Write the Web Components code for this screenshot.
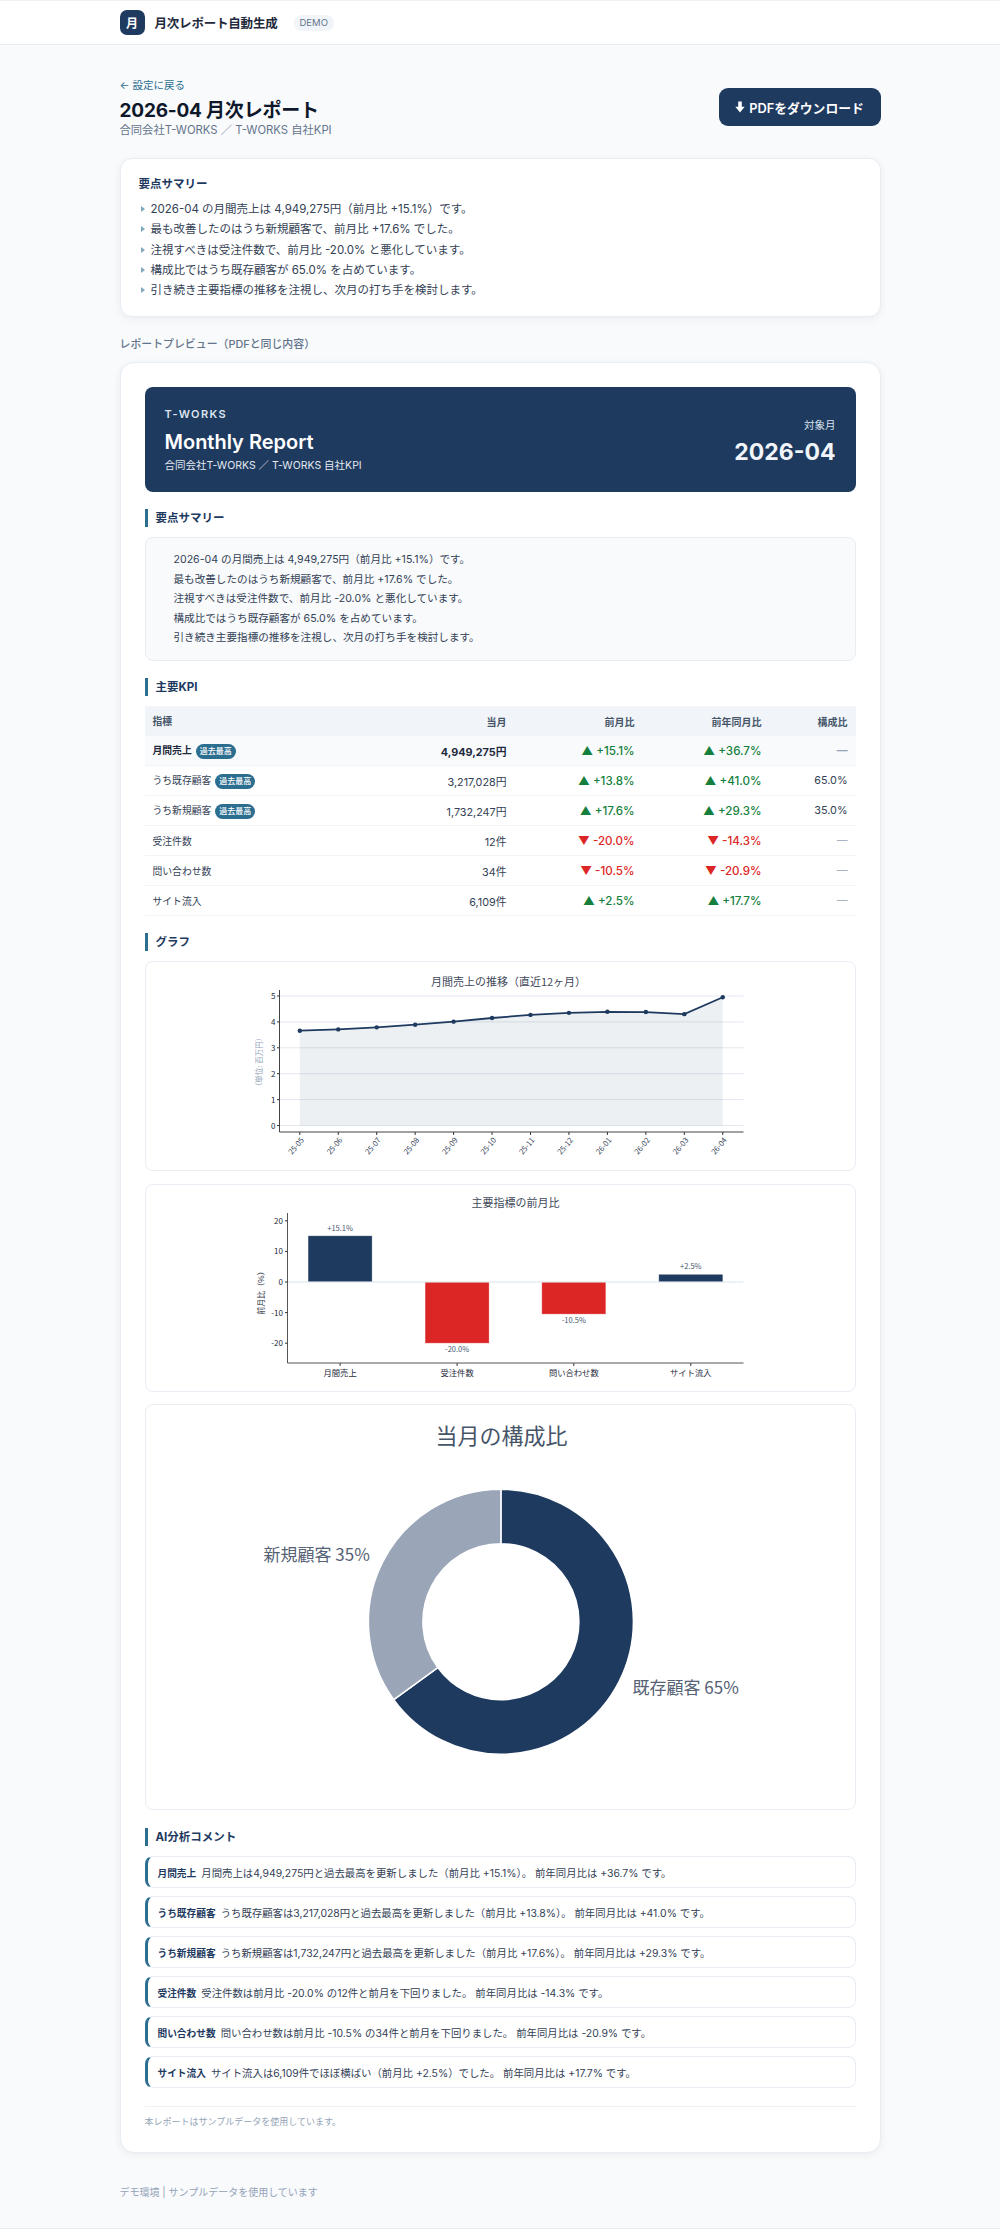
<!DOCTYPE html>
<html lang="ja">
<head>
<meta charset="utf-8">
<title>月次レポート</title>
<style>
    html, body { margin: 0; padding: 0; }
    body {
        background: #f8fafc;
        color: #1e293b;
        font-family: Inter, "Noto Sans CJK JP", sans-serif;
        border-top: 1px solid #eef1f5;
        border-bottom: 1px solid #e8ecf1;
        box-sizing: border-box;
        height: 2229px;
        overflow: hidden;
    }
    main { display: block; width: 761px; margin: 0 auto; padding: 34px 0 0; }
</style>
</head>
<body>
<app-header></app-header>
<main>
    <page-head></page-head>
    <summary-card></summary-card>
    <preview-label>レポートプレビュー（PDFと同じ内容）</preview-label>
    <report-card>
        <report-hero></report-hero>
        <report-section heading="要点サマリー"><summary-box></summary-box></report-section>
        <report-section heading="主要KPI"><kpi-table></kpi-table></report-section>
        <report-section heading="グラフ">
            <line-chart></line-chart>
            <bar-chart></bar-chart>
            <donut-chart></donut-chart>
        </report-section>
        <report-section heading="AI分析コメント" class="ai">
            <comment-item label="月間売上">月間売上は4,949,275円と過去最高を更新しました（前月比 +15.1%）。 前年同月比は +36.7% です。</comment-item>
            <comment-item label="うち既存顧客">うち既存顧客は3,217,028円と過去最高を更新しました（前月比 +13.8%）。 前年同月比は +41.0% です。</comment-item>
            <comment-item label="うち新規顧客">うち新規顧客は1,732,247円と過去最高を更新しました（前月比 +17.6%）。 前年同月比は +29.3% です。</comment-item>
            <comment-item label="受注件数">受注件数は前月比 -20.0% の12件と前月を下回りました。 前年同月比は -14.3% です。</comment-item>
            <comment-item label="問い合わせ数">問い合わせ数は前月比 -10.5% の34件と前月を下回りました。 前年同月比は -20.9% です。</comment-item>
            <comment-item label="サイト流入">サイト流入は6,109件でほぼ横ばい（前月比 +2.5%）でした。 前年同月比は +17.7% です。</comment-item>
        </report-section>
        <report-note>本レポートはサンプルデータを使用しています。</report-note>
    </report-card>
    <page-footer>デモ環境 | サンプルデータを使用しています</page-footer>
</main>

<script>
"use strict";
{
    const NAVY = "#1e3a5f";
    const TEAL = "#2c6e8f";
    const RED = "#dc2626";
    const GREEN = "#15803d";
    const SUMMARY = [
        "2026-04 の月間売上は 4,949,275円（前月比 +15.1%）です。",
        "最も改善したのはうち新規顧客で、前月比 +17.6% でした。",
        "注視すべきは受注件数で、前月比 -20.0% と悪化しています。",
        "構成比ではうち既存顧客が 65.0% を占めています。",
        "引き続き主要指標の推移を注視し、次月の打ち手を検討します。",
    ];

    /** small helper, every element here only needs a static shadow root */
    const define = (name, html) => {
        customElements.define(name, class extends HTMLElement {
            constructor() {
                super();
                this.attachShadow({ mode: "open" }).innerHTML =
                    typeof html === "function" ? html(this) : html;
            }
        });
    };

    define("app-header", /* html */ `
        <style>
            :host { display: block; background: #fff; border-bottom: 1px solid #e9edf2; height: 43px; box-sizing: content-box; }
            .in { width: 761px; margin: 0 auto; height: 43px; display: flex; align-items: center; gap: 10px; }
            .logo { width: 25px; height: 25px; border-radius: 7px; background: ${NAVY}; color: #fff; font-size: 12px; font-weight: 700; display: flex; align-items: center; justify-content: center; }
            .name { font-size: 12.5px; font-weight: 600; color: #1e293b; letter-spacing: -0.2px; }
            .tag { margin-left: 6px; font-size: 9.5px; color: #64748b; background: #f1f5f9; border-radius: 8px; padding: 0 6px; height: 16px; line-height: 16px; }
        </style>
        <div class="in"><div class="logo">月</div><div class="name">月次レポート自動生成</div><div class="tag">DEMO</div></div>
    `);

    define("page-head", /* html */ `
        <style>
            :host { display: flex; justify-content: space-between; align-items: flex-start; margin-bottom: 20px; }
            .back { font-size: 10.5px; line-height: 14px; color: ${TEAL}; }
            h1 { margin: 6px 0 0; font-size: 19px; line-height: 24px; font-weight: 700; color: #0f172a; letter-spacing: -0.2px; }
            .sub { font-size: 11.3px; line-height: 16px; margin-top: -1px; color: #64748b; }
            button { margin-top: 9px; width: 162px; height: 38px; border: 0; border-radius: 9px; background: ${NAVY}; color: #fff; font: 600 12.8px Inter, "Noto Sans CJK JP", sans-serif; display: flex; align-items: center; justify-content: center; gap: 4px; padding: 0; }
        </style>
        <div>
            <div class="back">← 設定に戻る</div>
            <h1>2026-04 月次レポート</h1>
            <div class="sub">合同会社T-WORKS ／ T-WORKS 自社KPI</div>
        </div>
        <button><svg width="10" height="12" viewBox="0 0 10 12"><path d="M3.2 0.5h3.6v5.3h2.9L5 11.5 0.3 5.8h2.9z" fill="#fff"/></svg>PDFをダウンロード</button>
    `);

    define("summary-card", /* html */ `
        <style>
            :host { display: block; background: #fff; border: 1px solid #e8edf3; border-radius: 12px; padding: 17px 18px 16px; box-shadow: 0 2px 8px rgba(15,23,42,.06); height: 159px; box-sizing: border-box; }
            h2 { margin: 0 0 7px; font-size: 11.5px; line-height: 16px; font-weight: 700; color: ${NAVY}; }
            ul { margin: 0; padding: 0; list-style: none; }
            li { font-size: 11.5px; line-height: 20.33px; color: #334155; padding-left: 12px; position: relative; }
            li::before { content: ""; position: absolute; left: 2px; top: 7px; border-left: 4px solid #7fa8bf; border-top: 3.5px solid transparent; border-bottom: 3.5px solid transparent; }
        </style>
        <h2>要点サマリー</h2>
        <ul>${SUMMARY.map((s) => `<li>${s}</li>`).join("")}</ul>
    `);

    define("preview-label", /* html */ `
        <style>:host { display: block; margin: 19px 0 10px; font-size: 10.9px; line-height: 16px; color: #64748b; font-weight: 500; }</style>
        <slot></slot>
    `);

    define("report-card", /* html */ `
        <style>:host { display: block; background: #fff; border: 1px solid #e8edf3; border-radius: 14px; padding: 24px 24px 24px; box-shadow: 0 2px 8px rgba(15,23,42,.06); height: 1791px; box-sizing: border-box; }</style>
        <slot></slot>
    `);

    define("report-hero", /* html */ `
        <style>
            :host { display: flex; justify-content: space-between; align-items: center; height: 105px; box-sizing: border-box; background: ${NAVY}; border-radius: 8px; padding: 0 20px; color: #fff; }
            .brand { font-size: 11px; line-height: 14px; font-weight: 600; letter-spacing: 1.4px; color: #dbe4ee; }
            .title { font-size: 20px; line-height: 26px; font-weight: 600; margin-top: 8px; letter-spacing: 0; }
            .sub { font-size: 10.5px; line-height: 14px; margin-top: 4px; color: #e2e8f0; }
            .right { text-align: right; padding-top: 6px; }
            .m { font-size: 10.5px; line-height: 14px; color: #dbe4ee; }
            .v { font-size: 23px; line-height: 28px; font-weight: 700; margin-top: 5px; color: #f1f5f9; }
        </style>
        <div><div class="brand">T-WORKS</div><div class="title">Monthly Report</div><div class="sub">合同会社T-WORKS ／ T-WORKS 自社KPI</div></div>
        <div class="right"><div class="m">対象月</div><div class="v">2026-04</div></div>
    `);

    define("report-section", (el) => /* html */ `
        <style>
            :host { display: block; margin-top: 17px; }
            :host(.ai) { margin-top: 18px; }
            h3 { margin: 0 0 10px; height: 18px; border-left: 3px solid ${TEAL}; padding-left: 8px; font-size: 11.5px; line-height: 18px; font-weight: 700; color: ${NAVY}; }
        </style>
        <h3>${el.getAttribute("heading")}</h3>
        <slot></slot>
    `);

    define("summary-box", /* html */ `
        <style>
            :host { display: block; height: 124px; box-sizing: border-box; background: #f8fafc; border: 1px solid #e8edf3; border-radius: 8px; padding: 12px 28px; }
            div { font-size: 10.6px; line-height: 19.6px; color: #334155; }
        </style>
        ${SUMMARY.map((s) => `<div>${s}</div>`).join("")}
    `);

    const UP = (v) => `<span class="up">▲ ${v}</span>`;
    const DOWN = (v) => `<span class="down">▼ ${v}</span>`;
    const DASH = `<span class="dash">—</span>`;
    const BADGE = `<span class="badge">過去最高</span>`;
    const ROWS = [
        ["月間売上" + BADGE, "4,949,275円", UP("+15.1%"), UP("+36.7%"), DASH],
        ["うち既存顧客" + BADGE, "3,217,028円", UP("+13.8%"), UP("+41.0%"), "65.0%"],
        ["うち新規顧客" + BADGE, "1,732,247円", UP("+17.6%"), UP("+29.3%"), "35.0%"],
        ["受注件数", "12件", DOWN("-20.0%"), DOWN("-14.3%"), DASH],
        ["問い合わせ数", "34件", DOWN("-10.5%"), DOWN("-20.9%"), DASH],
        ["サイト流入", "6,109件", UP("+2.5%"), UP("+17.7%"), DASH],
    ];

    define("kpi-table", /* html */ `
        <style>
            :host { display: block; }
            table { width: 100%; border-collapse: collapse; table-layout: fixed; font-size: 10.8px; color: #334155; }
            th { background: #f1f5f9; height: 30px; padding: 0 8px; font-weight: 600; color: #475569; text-align: right; font-size: 10px; }
            td { height: 29px; padding: 0 8px; text-align: right; border-bottom: 1px solid #f1f5f9; white-space: nowrap; }
            th:first-child, td:first-child { text-align: left; font-size: 9.8px; }
            tr.top td { background: #f8fafc; font-weight: 700; color: #1e293b; }
            .up, .down { font-weight: 500; font-size: 11.6px; }
            .up { color: ${GREEN}; }
            .down { color: ${RED}; }
            .dash { color: #94a3b8; }
            .badge { display: inline-block; margin-left: 4px; width: 40px; height: 15px; line-height: 15px; border-radius: 8px; background: ${TEAL}; color: #fff; font-size: 8px; font-weight: 500; text-align: center; vertical-align: 0; }
        </style>
        <table>
            <colgroup><col><col style="width:128px"><col style="width:128px"><col style="width:127px"><col style="width:86px"></colgroup>
            <thead><tr><th>指標</th><th>当月</th><th>前月比</th><th>前年同月比</th><th>構成比</th></tr></thead>
            <tbody>${ROWS.map((r, i) => `<tr class="${i ? "" : "top"}">${r.map((c) => `<td>${c}</td>`).join("")}</tr>`).join("")}</tbody>
        </table>
    `);

    const chartStyle = (h, gap) => /* css */ `
        :host { display: block; height: ${h}px; box-sizing: border-box; background: #fff; border: 1px solid #e8edf3; border-radius: 8px; margin-bottom: ${gap}px; overflow: hidden; }
        svg { display: block; width: 100%; height: 100%; font-family: "Noto Sans CJK JP", sans-serif; }
    `;

    const LINE_VALUES = [3.66, 3.71, 3.79, 3.89, 4.01, 4.15, 4.27, 4.35, 4.39, 4.38, 4.3, 4.95];
    const LINE_LABELS = ["25-05", "25-06", "25-07", "25-08", "25-09", "25-10", "25-11", "25-12", "26-01", "26-02", "26-03", "26-04"];

    const lineChartSvg = () => {
        const x = (i) => 299.3 + i * 38.45;
        const y = (v) => 1124.5 - v * 25.9;
        const points = LINE_VALUES.map((v, i) => `${x(i).toFixed(1)},${y(v).toFixed(1)}`);
        let grid = "";
        for (let v = 0; v <= 5; v++) {
            grid += `<line x1="279" x2="743" y1="${y(v)}" y2="${y(v)}" stroke="#e2e8f0" stroke-width="1"/>`;
            grid += `<line x1="276.5" x2="279" y1="${y(v)}" y2="${y(v)}" stroke="#333"/>`;
            grid += `<text x="275" y="${y(v) + 3}" text-anchor="end" font-size="8" fill="#1e293b">${v}</text>`;
        }
        const ticks = LINE_LABELS.map((l, i) => `
            <line x1="${x(i)}" x2="${x(i)}" y1="1131" y2="1134" stroke="#333"/>
            <text transform="translate(${x(i) + 3} 1138) rotate(-50)" text-anchor="end" dominant-baseline="middle" font-size="7.5" fill="#334155">${l}</text>`).join("");
        return `<svg viewBox="146 961 708 208">
            <text x="508" y="985" text-anchor="middle" font-size="11" fill="#3f4a5a">月間売上の推移（直近12ヶ月）</text>
            ${grid}
            <polygon points="${x(0)},1124.5 ${points.join(" ")} ${x(11)},1124.5" fill="${NAVY}" fill-opacity=".08"/>
            <polyline points="${points.join(" ")}" fill="none" stroke="${NAVY}" stroke-width="1.8"/>
            ${LINE_VALUES.map((v, i) => `<circle cx="${x(i)}" cy="${y(v)}" r="2.2" fill="${NAVY}"/>`).join("")}
            <path d="M279 989V1131H743" fill="none" stroke="#444" stroke-width="1"/>
            ${ticks}
            <text transform="translate(261 1061) rotate(-90)" text-anchor="middle" font-size="7.5" fill="#94a3b8">（単位: 百万円）</text>
        </svg>`;
    };

    const BARS = [
        { name: "月間売上", v: 15.1, label: "+15.1%", x: 307.6 },
        { name: "受注件数", v: -20, label: "-20.0%", x: 424.6 },
        { name: "問い合わせ数", v: -10.5, label: "-10.5%", x: 541.3 },
        { name: "サイト流入", v: 2.5, label: "+2.5%", x: 658.3 },
    ];

    const barChartSvg = () => {
        const y = (v) => 1281 - v * 3.06;
        let ticks = "";
        for (const v of [20, 10, 0, -10, -20]) {
            ticks += `<line x1="284.5" x2="287" y1="${y(v)}" y2="${y(v)}" stroke="#333"/>`;
            ticks += `<text x="282.5" y="${y(v) + 3}" text-anchor="end" font-size="8" fill="#1e293b">${v}</text>`;
        }
        const bars = BARS.map((b) => {
            const top = Math.min(y(0), y(b.v));
            const h = Math.abs(y(b.v) - y(0));
            const cx = b.x + 32;
            const ly = b.v > 0 ? top - 5 : top + h + 9;
            return `<rect x="${b.x}" y="${top}" width="64" height="${h}" fill="${b.v > 0 ? NAVY : RED}" stroke="#fff" stroke-opacity=".35" stroke-width=".8"/>
                <text x="${cx}" y="${ly}" text-anchor="middle" font-size="7.5" fill="#475569">${b.label}</text>
                <line x1="${cx}" x2="${cx}" y1="1362" y2="1365" stroke="#333"/>
                <text x="${cx}" y="1375" text-anchor="middle" font-size="8.3" fill="#1e293b">${b.name}</text>`;
        }).join("");
        return `<svg viewBox="146 1184 708 206">
            <text x="515" y="1206" text-anchor="middle" font-size="11" fill="#3f4a5a">主要指標の前月比</text>
            ${bars}
            <line x1="287" x2="743" y1="1281" y2="1281" stroke="#dbe4ee" stroke-width="1"/>
            <path d="M287 1212V1362H743" fill="none" stroke="#555" stroke-width="1"/>
            ${ticks}
            <text transform="translate(263 1290) rotate(-90)" text-anchor="middle" font-size="8" fill="#1e293b">前月比（%）</text>
        </svg>`;
    };

    const donutSvg = () => {
        const cx = 500.4, cy = 1620.7, R = 132.5, r = 78;
        const pt = (rad, deg) => {
            const a = (deg * Math.PI) / 180;
            return `${(cx + rad * Math.sin(a)).toFixed(2)} ${(cy - rad * Math.cos(a)).toFixed(2)}`;
        };
        const slice = (from, to, fill) => {
            const large = to - from > 180 ? 1 : 0;
            return `<path d="M${pt(R, from)}A${R} ${R} 0 ${large} 1 ${pt(R, to)}L${pt(r, to)}A${r} ${r} 0 ${large} 0 ${pt(r, from)}Z" fill="${fill}" stroke="#fff" stroke-width="1.5"/>`;
        };
        return `<svg viewBox="146 1404 708 404">
            <text x="501" y="1443" text-anchor="middle" font-size="22" fill="#475569">当月の構成比</text>
            ${slice(0, 234, NAVY)}
            ${slice(234, 360, "#9aa6b8")}
            <text x="263" y="1560" font-size="17" fill="#566275">新規顧客 35%</text>
            <text x="632" y="1693" font-size="17" fill="#566275">既存顧客 65%</text>
        </svg>`;
    };

    define("line-chart", /* html */ `<style>${chartStyle(210, 13)}</style>${lineChartSvg()}`);
    define("bar-chart", /* html */ `<style>${chartStyle(208, 12)}</style>${barChartSvg()}`);
    define("donut-chart", /* html */ `<style>${chartStyle(406, 0)}</style>${donutSvg()}`);

    define("comment-item", (el) => /* html */ `
        <style>
            :host { display: flex; align-items: center; height: 32px; box-sizing: border-box; margin-bottom: 8px; background: #fff; border: 1px solid #e8edf3; border-left: 3px solid ${TEAL}; border-radius: 8px; padding: 0 10px; font-size: 10.4px; color: #334155; }
            b { color: ${NAVY}; font-weight: 700; font-size: 9.7px; margin-right: 5px; }
        </style>
        <div><b>${el.getAttribute("label")}</b><slot></slot></div>
    `);

    define("report-note", /* html */ `
        <style>:host { display: block; margin-top: 18px; border-top: 1px solid #eef1f5; padding-top: 8px; font-size: 9px; line-height: 14px; color: #94a3b8; }</style>
        <slot></slot>
    `);

    define("page-footer", /* html */ `
        <style>:host { display: block; margin-top: 31px; font-size: 10px; line-height: 16px; color: #94a3b8; }</style>
        <slot></slot>
    `);
}
</script>
</body>
</html>
